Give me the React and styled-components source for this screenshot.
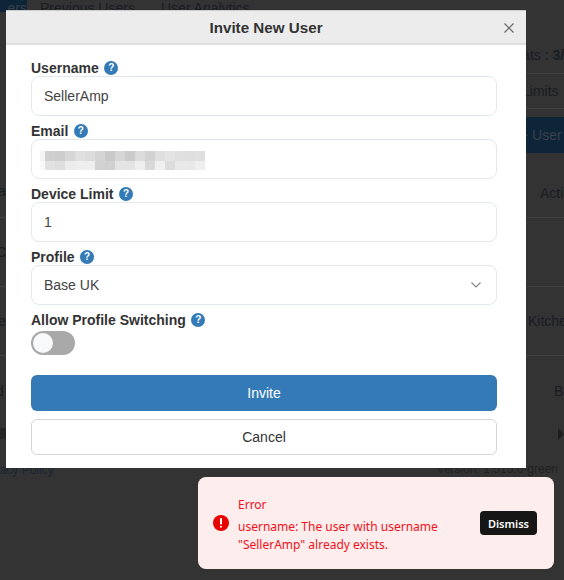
import React from "react";
import styled, { createGlobalStyle } from "styled-components";

const Global = createGlobalStyle`
  html, body { margin: 0; padding: 0; background: #333; }
  body { font-family: "Liberation Sans", Arial, sans-serif; }
  * { box-sizing: border-box; }
`;

const Page = styled.div`
  position: relative;
  width: 564px;
  height: 580px;
  overflow: hidden;
  background: #333;
  color: #181d22;
  font-size: 14px;
`;

const TabRow = styled.div`
  display: flex;
  height: 12px;
  overflow: hidden;
`;
const ActiveTab = styled.div`
  width: 27px;
  background: #0e2438;
  color: #3a4048;
  text-align: right;
  line-height: 16px;
  flex: none;
`;
const Tab = styled.div`
  padding: 0 13px;
  line-height: 16px;
  font-size: 14px;
  color: #181d22;
  flex: none;
`;

const Body = styled.div`
  display: flex;
  justify-content: space-between;
  height: 568px;
`;
const LeftCol = styled.div`
  width: 30px;
  flex: none;
  display: flex;
  flex-direction: column;
`;
const RightCol = styled.div`
  width: 38px;
  flex: none;
  display: flex;
  flex-direction: column;
  white-space: nowrap;
`;
const Cell = styled.div`
  height: ${(p) => p.$h}px;
  flex: none;
  display: flex;
  align-items: center;
  border-bottom: ${(p) => (p.$line ? "1px solid #424242" : "0")};
  overflow: hidden;
  padding-top: ${(p) => p.$top || 0}px;
`;
const Clip = styled.span`
  display: block;
  margin-left: ${(p) => p.$shift || 0}px;
`;
const DarkButton = styled.div`
  height: 36px;
  margin-top: 8px;
  background: #0e2438;
  color: #3a4048;
  line-height: 36px;
  text-indent: -6px;
  flex: none;
  overflow: hidden;
`;
const ScrollLeft = styled.div`
  width: 6px;
  height: 11px;
  margin-top: 3px;
  background: #262626;
  flex: none;
`;
const ScrollArrow = styled.div`
  width: 0;
  height: 0;
  margin: 3px 0 0 32px;
  border-style: solid;
  border-width: 6px 0 6px 6px;
  border-color: transparent transparent transparent #1e1e1e;
  flex: none;
`;

const Version = styled.div`
  position: absolute;
  right: 6px;
  top: 462px;
  font-size: 12px;
  color: #222;
`;
const Policy = styled.div`
  position: absolute;
  left: -21px;
  top: 463px;
  font-size: 12px;
  color: #1a2533;
`;

const Modal = styled.div`
  position: absolute;
  left: 6px;
  top: 10px;
  width: 520px;
  height: 458px;
  background: #fff;
  border-top: 1px solid #ccc;
`;
const Header = styled.div`
  position: relative;
  height: 34px;
  background: #ececec;
  border-bottom: 2px solid #dedede;
  display: flex;
  align-items: center;
  justify-content: center;
`;
const Title = styled.h2`
  margin: 0;
  font-size: 15.2px;
  font-weight: bold;
  color: #333;
`;
const Close = styled.span`
  position: absolute;
  right: 12px;
  top: 12px;
  width: 10px;
  height: 10px;
  display: block;
  color: #666;
`;
const Form = styled.form`
  padding: 15px 29px 0 25px;
  display: flex;
  flex-direction: column;
`;
const Field = styled.div`
  display: flex;
  flex-direction: column;
`;
const LabelRow = styled.div`
  display: flex;
  align-items: center;
  gap: 5.5px;
  height: 16px;
`;
const Label = styled.label`
  font-size: 14px;
  font-weight: bold;
  color: #333;
`;
const Help = styled.span`
  width: 14px;
  height: 14px;
  border-radius: 50%;
  background: #337ab7;
  color: #fff;
  font-size: 10px;
  font-weight: bold;
  line-height: 14px;
  text-align: center;
  flex: none;
`;
const Input = styled.div`
  position: relative;
  height: 40px;
  margin-bottom: 7px;
  border: 1px solid #e2e8f0;
  border-radius: 8px;
  background: #fff;
  padding-left: 12px;
  display: flex;
  align-items: center;
  font-size: 14px;
  color: #444;
`;
const Chevron = styled.span`
  position: absolute;
  right: 15px;
  top: 16px;
  width: 10px;
  height: 6px;
  display: block;
  color: #888;
`;
const Mosaic = styled.svg`
  position: absolute;
  left: 8px;
  top: 11px;
  display: block;
`;
const Toggle = styled.div`
  width: 44px;
  height: 24px;
  border-radius: 12px;
  background: #a9a9a9;
  padding: 2px;
  margin-top: 3px;
`;
const Knob = styled.div`
  width: 20px;
  height: 20px;
  border-radius: 50%;
  background: #f8f9fb;
`;
const Primary = styled.button`
  height: 36px;
  margin-top: 20px;
  border: 0;
  border-radius: 6px;
  background: #337ab7;
  color: #fff;
  font: 14px "Liberation Sans", Arial, sans-serif;
`;
const Secondary = styled.button`
  height: 36px;
  margin-top: 8px;
  border: 1px solid #d6d6d6;
  border-radius: 6px;
  background: #fff;
  color: #333;
  font: 14px "Liberation Sans", Arial, sans-serif;
`;

const Toast = styled.div`
  position: absolute;
  left: 198px;
  top: 477px;
  width: 356px;
  height: 92px;
  border-radius: 8px;
  background: #fdeded;
  display: flex;
  align-items: center;
  padding: 0 17px 0 15px;
  font-family: "Noto Sans", sans-serif;
  color: #f01020;
`;
const ToastIcon = styled.span`
  width: 16px;
  height: 16px;
  flex: none;
  display: block;
  margin-right: 9px;
`;
const ToastText = styled.div`
  flex: 1;
  padding-top: 4px;
  font-size: 12px;
  line-height: 18px;
`;
const ToastTitle = styled.div`
  margin-bottom: 4px;
`;
const Dismiss = styled.button`
  width: 57px;
  height: 24px;
  padding: 0;
  border: 0;
  border-radius: 4px;
  background: #161616;
  color: #fff;
  font: 600 11px "Noto Sans", sans-serif;
  flex: none;
`;

const ROW1 = ["#f4f4f4", "#d0d0d0", "#cdcdcd", "#d6d6d6", "#e0e0e0", "#dcdcdc", "#d4d4d4", "#c9c9c9", "#d6d6d6", "#cbcbcb", "#dcdcdc", "#d2d2d2", "#dfdfdf", "#e4e4e4", "#e0e0e0", "#dedede", "#e0e0e0"];
const ROW2 = ["#f8f8f8", "#e2e2e2", "#dedede", "#ececec", "#eeeeee", "#eeeeee", "#d2d2d2", "#d0d0d0", "#e4e4e4", "#e4e4e4", "#eeeeee", "#d8d8d8", "#f0f0f0", "#dcdcdc", "#e9e9e9", "#e8e8e8", "#efefef"];

const EmailBlur = () => (
  <Mosaic width="165" height="19" viewBox="0 0 165 19" aria-hidden="true">
    {[ROW1, ROW2].map((row, r) =>
      row.map((c, i) => (
        <rect
          key={`${r}-${i}`}
          x={i === 0 ? 0 : 5 + (i - 1) * 10}
          y={r * 10}
          width={i === 0 ? 5 : 10}
          height={r === 0 ? 10 : 9}
          fill={c}
        />
      ))
    )}
  </Mosaic>
);

const FormField = ({ label, children }) => (
  <Field>
    <LabelRow>
      <Label>{label}</Label>
      <Help>?</Help>
    </LabelRow>
    {children}
  </Field>
);

export default function App() {
  return (
    <Page>
      <Global />
      <TabRow>
        <ActiveTab>ers</ActiveTab>
        <Tab>Previous Users</Tab>
        <Tab>User Analytics</Tab>
      </TabRow>
      <Body>
        <LeftCol>
          <Cell $h={206} $top={152} $line><Clip $shift={-2}>a</Clip></Cell>
          <Cell $h={69} $line><Clip $shift={-4}>C</Clip></Cell>
          <Cell $h={69} $line><Clip $shift={-2}>e</Clip></Cell>
          <Cell $h={69}><Clip $shift={-4}>d</Clip></Cell>
          <ScrollLeft />
        </LeftCol>
        <RightCol>
          <Cell $h={62} $top={24} $line><Clip $shift={-21}>Seats : <b>3/</b></Clip></Cell>
          <Cell $h={35} $line><Clip $shift={-4}>Limits</Clip></Cell>
          <DarkButton>+ User</DarkButton>
          <Cell $h={65} $top={16} $line><Clip $shift={14}>Actions</Clip></Cell>
          <Cell $h={69} $line />
          <Cell $h={69} $line><Clip $shift={2}>Kitchen</Clip></Cell>
          <Cell $h={69}><Clip $shift={28}>Base</Clip></Cell>
          <ScrollArrow />
        </RightCol>
      </Body>
      <Policy>Privacy Policy</Policy>
      <Version>Version: 1.515.0-green</Version>

      <Modal>
        <Header>
          <Title>Invite New User</Title>
          <Close>
            <svg width="10" height="10" viewBox="0 0 10 10" fill="none" stroke="currentColor" strokeWidth="1.200" display="block">
              <path d="M.5.5l9 9M9.500.5l-9 9" />
            </svg>
          </Close>
        </Header>
        <Form>
          <FormField label="Username">
            <Input>SellerAmp</Input>
          </FormField>
          <FormField label="Email">
            <Input><EmailBlur /></Input>
          </FormField>
          <FormField label="Device Limit">
            <Input>1</Input>
          </FormField>
          <FormField label="Profile">
            <Input>
              Base UK
              <Chevron>
                <svg width="10" height="6" viewBox="0 0 10 6" fill="none" stroke="currentColor" strokeWidth="1.200" display="block">
                  <path d="M.5.5L5 5 9.500.5" />
                </svg>
              </Chevron>
            </Input>
          </FormField>
          <FormField label="Allow Profile Switching">
            <Toggle><Knob /></Toggle>
          </FormField>
          <Primary type="button">Invite</Primary>
          <Secondary type="button">Cancel</Secondary>
        </Form>
      </Modal>

      <Toast>
        <ToastIcon>
          <svg width="16" height="16" viewBox="0 0 16 16" display="block">
            <circle cx="8" cy="8" r="8" fill="#e60000" />
            <rect x="7" y="3" width="2" height="6.500" rx="0.800" fill="#fff" />
            <rect x="7" y="10.800" width="2" height="2" rx="1" fill="#fff" />
          </svg>
        </ToastIcon>
        <ToastText>
          <ToastTitle>Error</ToastTitle>
          username: The user with username<br />"SellerAmp" already exists.
        </ToastText>
        <Dismiss type="button">Dismiss</Dismiss>
      </Toast>
    </Page>
  );
}
